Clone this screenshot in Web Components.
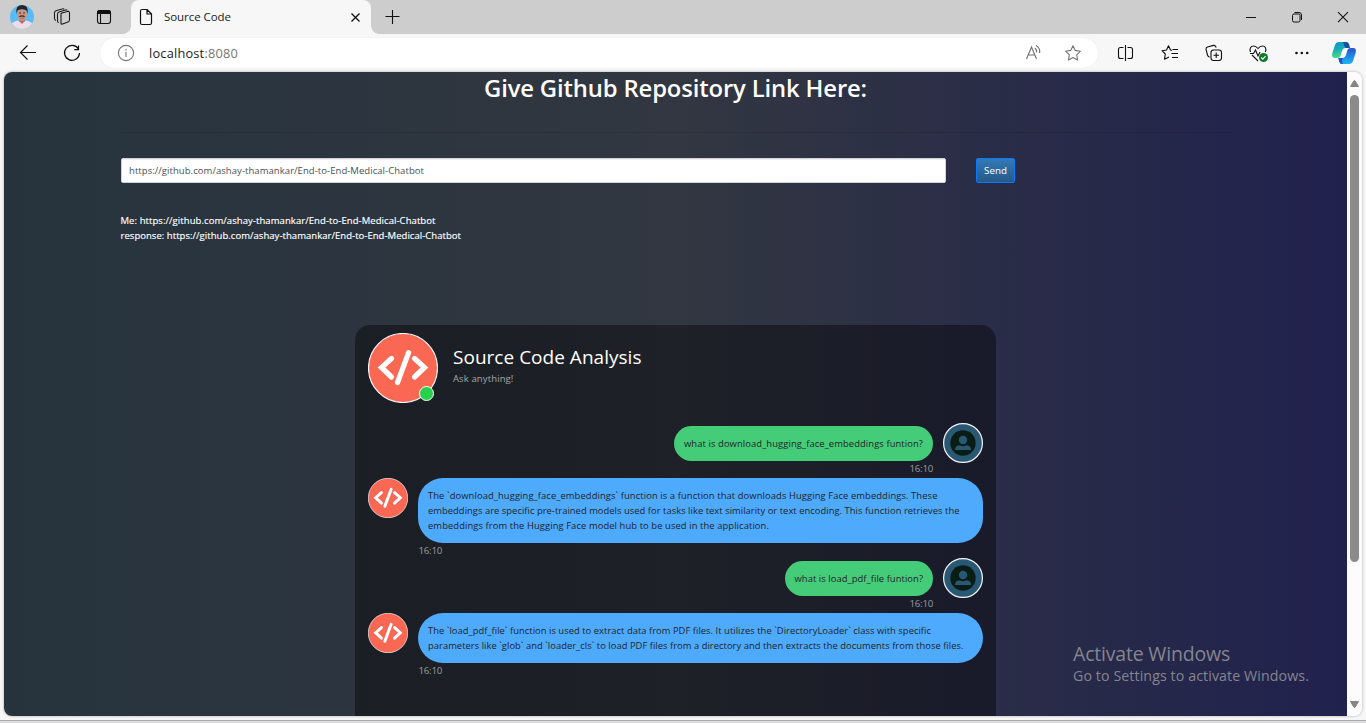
<!DOCTYPE html>
<html lang="en"><head><meta charset="utf-8"><title>Source Code</title>
<style>html,body{margin:0;height:100%;overflow:hidden}body{font-family:"Open Sans","Noto Sans",sans-serif;background:#f7f7f7}</style></head>
<body><browser-window></browser-window>

<template id="t-window"><style>
:host{display:flex;flex-direction:column;width:1366px;height:723px;background:#f7f7f7;overflow:hidden}
.frame{display:flex;height:644px;margin:0 4px 0 4px;border-radius:8px;overflow:hidden;box-shadow:0 0 3px #0005;flex:none}
.edge{margin-top:4px;height:2px;border-top:1px solid #aaa;background:#dcdcdf}
</style><tab-strip></tab-strip><address-bar></address-bar>
<div class="frame"><web-page></web-page><scroll-bar></scroll-bar></div><div class="edge"></div></template>

<template id="t-tabs"><style>
:host{display:flex;height:34px;background:#cdcdcd;flex:none;align-items:center}
svg{display:block;flex:none}
.left{display:flex;width:131px;box-sizing:border-box;padding-left:10px;align-items:center}
.tab{width:240px;height:34px;background:#f7f7f7;border-radius:8px 8px 0 0;display:flex;align-items:center;box-sizing:border-box;padding:0 9px 0 8px;position:relative;font-size:11.5px;color:#1b1b1b}
.tab:before,.tab:after{content:"";position:absolute;bottom:0;width:8px;height:8px}
.tab:before{left:-8px;background:radial-gradient(circle at 0 0,transparent 7.5px,#f7f7f7 8px)}
.tab:after{right:-8px;background:radial-gradient(circle at 100% 0,transparent 7.5px,#f7f7f7 8px)}
.tab fit-text{margin:0 auto 2px 11px}
.ctl{display:flex;margin-left:auto;gap:30px;padding-right:15px}
</style>
<div class="left">
<svg width="24" height="24" viewBox="0 0 24 24"><defs><clipPath id="c"><circle cx="12" cy="12" r="12"/></clipPath></defs><g clip-path="url(#c)"><rect width="24" height="24" fill="#58bdf4"/><path d="M0 24V20Q2 17 8 15.500L12 18L16 15.500Q22 17 24 20V24Z" fill="#eddce8"/><path d="M9 13h6v3l-3 3-3-3z" fill="#a77262"/><ellipse cx="12" cy="9.300" rx="5" ry="6.600" fill="#c99685"/><path d="M6.500 9Q5 0 12 0T17.500 9L16.500 5.500Q12 3 7.500 5.500Z" fill="#25252b"/><path d="M9 8h2M13 8h2" stroke="#493332"/><path d="M9.400 11.700Q12 10 14.600 11.700" stroke="#342327" stroke-width="1.300" fill="none"/><path d="M10.500 13.200h3" stroke="#a64449" stroke-width=".8"/></g></svg>
<svg style="margin-left:19px" width="18" height="18" viewBox="0 0 18 18" fill="none" stroke="#1b1b1b" stroke-width="1.100" stroke-linejoin="round"><path d="M8 6.500Q7.500 5.500 9 5L14.500 3.500Q16.500 3 16.500 5V12Q16.500 13.500 15 14L9.500 16Q8 16.500 8 15Z"/><path d="M5.800 14.500Q4.500 14.500 4.500 13V6Q4.500 4.500 6 4L12.500 2Q13.500 1.500 14.200 2.500M3 12.500Q1.500 12 1.500 10.500V4.500Q1.500 3.200 3 2.700L9 1Q10.500.5 11.200 1.300"/></svg>
<svg style="margin-left:25px" width="16" height="16" viewBox="0 0 16 16" fill="none" stroke="#111" stroke-width="1.100"><rect x="1.500" y="1.500" width="13" height="13" rx="2.500"/><path d="M1.500 4.500V4Q1.500 1.500 4 1.500H12Q14.500 1.500 14.500 4V4.500Z" fill="#111"/><path d="M4.500 5v9"/></svg></div>
<div class="tab"><svg width="14" height="18" viewBox="0 0 14 18" fill="none" stroke="#111" stroke-width="1.200" stroke-linejoin="round"><path d="M8 1.500H3Q1.500 1.500 1.500 3V15Q1.500 16.500 3 16.500H11Q12.500 16.500 12.500 15V6ZM8 1.500V6H12.500"/></svg><fit-text w="67">Source Code</fit-text>
<svg width="14" height="14" viewBox="0 0 14 14" stroke="#111" stroke-width="1.300"><path d="M3.500 3.500l8 8M11.500 3.500L3.500 11.500"/></svg></div>
<svg style="margin-left:14px" width="16" height="16" viewBox="0 0 16 16" stroke="#111" stroke-width="1.100"><path d="M7.500 1v14M.5 7.500h14"/></svg>
<div class="ctl"><svg width="16" height="16" stroke="#111"><path d="M3 8.500h10"/></svg><svg width="16" height="16" fill="none" stroke="#111"><rect x="3.500" y="5" width="7.500" height="8" rx="1.500"/><path d="M5.500 3.500H10Q12.500 3.500 12.500 6V11"/></svg><svg width="16" height="16" stroke="#111" stroke-width="1.100"><path d="M3 3.200l10 10M13 3.200L3 13.200"/></svg></div></template>

<template id="t-address"><style>
:host{display:flex;height:38px;align-items:center;background:#f7f7f7;flex:none;box-sizing:border-box;padding-left:18px}
svg{display:block;flex:none}
.field{display:flex;align-items:center;width:998px;height:30px;border-radius:15px;background:#fff;margin-left:18px;box-sizing:border-box;padding:0 16px 0 17px;font-size:12.800px;box-shadow:0 0 2px #0001;color:#1b1b1b}
.field fit-text{margin:0 auto 0 14px}.port{color:#767676}
.tools{display:flex;gap:24px;margin-left:18px;align-items:center}
</style>
<svg width="20" height="20" fill="none" stroke="#111" stroke-width="1.150"><path d="M18 9.500H2.500M9.500 2.500L2.500 9.500l7 7"/></svg>
<svg style="margin-left:24px" width="20" height="20" fill="none" stroke="#111" stroke-width="1.200"><path d="M16.400 5.900A7.500 7.500 0 1 0 17.500 10M16.500 2.500V6.700H12.300"/></svg>
<div class="field"><svg width="18" height="18" fill="none" stroke="#737373" stroke-width="1.100"><circle cx="9" cy="9" r="7.600"/><path d="M9 8v5M9 5v1.500"/></svg><fit-text w="89">localhost<span class="port">:8080</span></fit-text>
<svg width="17" height="18" fill="none" stroke="#737373" stroke-width="1.150"><path d="M1.500 15L6.500 3 11.500 15M3.200 11H9.800M9.800 4.200Q12 5.500 11.500 8.500M11 1.500Q15.500 4 14.500 9"/></svg>
<svg style="margin-left:22px" width="18" height="18" fill="none" stroke="#737373" stroke-width="1.100" stroke-linejoin="round"><path d="M9 1.700l2.300 4.700 5.100.8-3.700 3.600.9 5.200L9 13.500 4.400 16l.9-5.200L1.600 7.200l5.100-.8z"/></svg></div>
<div class="tools">
<svg width="20" height="20" fill="none" stroke="#111" stroke-width="1.100"><path d="M7.500 4.500H4.500Q2.500 4.500 2.500 6.500V13.500Q2.500 15.500 4.500 15.500H7.500M11.500 4.500H14.500Q16.500 4.500 16.500 6.500V13.500Q16.500 15.500 14.500 15.500H11.500M9.500 2v16"/></svg>
<svg width="20" height="20" fill="none" stroke="#111" stroke-width="1.100" stroke-linejoin="round"><path d="M12 7.500L10.500 7 8.500 2.700 6.500 7 2 7.700l3.300 3.300-.8 5.200 4.500-2.300M12.500 6.500H18M11.500 10.500H18M12 14.500H18"/></svg>
<svg width="20" height="20" fill="none" stroke="#111" stroke-width="1.100"><rect x="7" y="7" width="10.500" height="10.500" rx="2.500"/><path d="M12.200 9.500v5.500M9.500 12.200H15M5.700 14Q4 14 3.500 12L2 6.500Q1.700 4.500 3.500 4L9.500 2.400Q11.500 2 12.200 4.500"/></svg>
<svg width="20" height="20" fill="none" stroke="#111" stroke-width="1.100"><path d="M2.500 9C1 5.500 3 3 5.500 3Q8 3 10 5.500Q12 3 14.500 3C17 3 19 5.500 17.300 9M2 10.500H5.500L7.500 7 10 13 12 9M4 12L10 18"/><circle cx="15.500" cy="14.500" r="4.500" fill="#0d7b2b" stroke="none"/><path d="M13.300 14.500l1.500 1.600 2.700-3" stroke="#fff"/></svg>
<svg width="20" height="20" fill="#111"><circle cx="4.500" cy="10" r="1.300"/><circle cx="9.800" cy="10" r="1.300"/><circle cx="15.200" cy="10" r="1.300"/></svg></div>
<svg style="margin-left:19px" width="26" height="24" viewBox="0 0 26 24"><defs><linearGradient id="a" x2=".3" y2="1"><stop stop-color="#168dd0"/><stop offset=".5" stop-color="#17adb8"/><stop offset="1" stop-color="#4fdd82"/></linearGradient><linearGradient id="b" x2="0" y2="1"><stop stop-color="#2853cf"/><stop offset="1" stop-color="#19b8f4"/></linearGradient></defs><path d="M8 1H15Q17 1 17.800 3.500L18.600 7H14Q12 7 11 10L9.500 15Q8.800 17 6.500 17H4Q0 17 1.400 12L4 4Q5 1 8 1Z" fill="url(#a)"/><path d="M12 1H15.500Q17.500 1 18.300 4L19 7H14.500Q13 5 12 1Z" fill="#164fa8"/><path d="M18 23H11Q9 23 8.200 20.500L7.400 17H12Q14 17 15 14L16.500 9Q17.200 7 19.500 7H22Q26 7 24.600 12L22 20Q21 23 18 23Z" fill="url(#b)"/><path d="M7.400 17H12Q10 20 12 23H11Q9 23 8.200 20.500Z" fill="#2450d5"/></svg></template>

<template id="t-page"><style>
:host{display:flex;flex-direction:column;flex:none;width:1343px;height:644px;background:linear-gradient(to right,rgb(38,51,61),rgb(50,55,65),rgb(33,33,78));overflow:hidden;position:relative;color:#fff}
h1{margin:0;text-align:center;font-size:23.800px;line-height:33px;height:33px;font-weight:600;flex:none}
hr{margin:27px 0 0;width:1110px;align-self:center;border:0;border-top:1px solid #0000001a;flex:none}
.row{display:flex;margin:25px 0 0 117px;gap:30px;height:25px;flex:none}
.in{width:825px;box-sizing:border-box;border:1px solid #ced4da;border-radius:2px;background:#fff;padding-left:7px;color:#495057;font-size:9.500px;line-height:23px;box-shadow:inset 0 1px 1px #0001}
.btn{width:39px;box-sizing:border-box;border:1px solid #087aff;border-radius:2px;background:linear-gradient(#337ab7,#265a88);font:500 9.800px/23px "Open Sans",sans-serif;text-align:center;color:#fff;padding:0}
.log{display:flex;flex-direction:column;flex:none;margin:30px 0 0 116.500px;font-size:9.500px;line-height:15px;font-weight:500;height:112px;-webkit-text-stroke:.15px #fff}
.log fit-text{align-self:flex-start}
chat-card{margin-left:351px}
.wm{position:absolute;left:1069px;top:569px;display:flex;flex-direction:column;align-items:flex-start;color:#84858e}
.wm fit-text:first-child{font-size:19.500px;line-height:25px}.wm fit-text:last-child{font-size:14.200px;line-height:20px}
</style>
<h1><fit-text w="383">Give Github Repository Link Here:</fit-text></h1><hr>
<div class="row"><div class="in"><fit-text w="295">https://github.com/ashay-thamankar/End-to-End-Medical-Chatbot</fit-text></div><button class="btn"><fit-text w="23">Send</fit-text></button></div>
<div class="log"><fit-text w="315">Me: https://github.com/ashay-thamankar/End-to-End-Medical-Chatbot</fit-text><fit-text w="340.500">response: https://github.com/ashay-thamankar/End-to-End-Medical-Chatbot</fit-text></div>
<chat-card></chat-card>
<div class="wm"><fit-text w="157">Activate Windows</fit-text><fit-text w="236">Go to Settings to activate Windows.</fit-text></div></template>

<template id="t-card"><style>
:host{display:flex;flex-direction:column;width:641px;height:500px;background:#0006;border-radius:15px 15px 0 0;box-sizing:border-box;padding:8px 13px 0;flex:none}
header{display:flex;height:90px;flex:none}
.av{position:relative;width:70px;height:70px}
.dot{position:absolute;left:51px;top:53px;width:15px;height:15px;border-radius:50%;box-sizing:border-box;background:#28d14c;border:1.500px solid #fff}
.info{display:flex;flex-direction:column;align-items:flex-start;padding:10px 0 0 15px}
.info fit-text:first-child{font-size:19px;line-height:28px}
.info fit-text:last-child{font-size:9.500px;line-height:15px;color:#ffffff99}
</style><header><div class="av"><code-avatar style="--s:70px"></code-avatar><span class="dot"></span></div>
<div class="info"><fit-text w="188.500">Source Code Analysis</fit-text><fit-text w="60.500">Ask anything!</fit-text></div></header>
<chat-message class="user" time="16:10"><fit-text w="239">what is download_hugging_face_embeddings funtion?</fit-text></chat-message>
<chat-message class="bot" time="16:10"><fit-text w="509.500">The `download_hugging_face_embeddings` function is a function that downloads Hugging Face embeddings. These</fit-text><fit-text w="531.500">embeddings are specific pre-trained models used for tasks like text similarity or text encoding. This function retrieves the</fit-text><fit-text w="341">embeddings from the Hugging Face model hub to be used in the application.</fit-text></chat-message>
<chat-message class="user" time="16:10"><fit-text w="128.500">what is load_pdf_file funtion?</fit-text></chat-message>
<chat-message class="bot" time="16:10"><fit-text w="503">The `load_pdf_file` function is used to extract data from PDF files. It utilizes the `DirectoryLoader` class with specific</fit-text><fit-text w="535.500">parameters like `glob` and `loader_cls` to load PDF files from a directory and then extracts the documents from those files.</fit-text></chat-message></template>

<template id="t-msg"><style>
:host{display:flex;flex:none;gap:10px}
:host(.user){flex-direction:row-reverse;height:55px}
.col{display:flex;flex-direction:column;align-items:flex-start}
:host(.user) .col{align-items:flex-end;padding-top:3px}
:host(.bot) .col{flex:1}
.bub{display:flex;flex-direction:column;align-items:flex-start;padding:10px;border-radius:25px;box-sizing:border-box;color:#212529;font-size:9.400px;line-height:15px}
:host(.user) .bub{background:#45cc79}
:host(.bot) .bub{background:#4eaafd;width:565px}
.time{font-size:9.700px;line-height:15px;color:#ffffff8c}
:host(.bot) .time{padding-left:.500px}
user-avatar,code-avatar{--s:40px}
:host(.user) code-avatar,:host(.bot) user-avatar{display:none}
</style><code-avatar></code-avatar><user-avatar></user-avatar><div class="col"><div class="bub"><slot></slot></div><span class="time"><fit-text w="23.500"></fit-text></span></div></template>

<template id="t-code"><style>:host{display:block;width:var(--s);height:var(--s);flex:none}svg{display:block;width:100%;height:100%}</style>
<svg viewBox="0 0 70 70"><circle cx="35" cy="35" r="34.500" fill="#fa6854" stroke="#f5f6fa" stroke-width="1.200"/><g fill="none" stroke="#fff" stroke-width="5.200"><path stroke-linejoin="miter" d="M23.500 25.500L13.500 34.500l10 9.500M46.500 25.500L56.500 34.500l-10 9.500" stroke-linecap="round"/><path d="M40.500 19.800L29.500 49.500" stroke-linecap="round"/></g></svg></template>

<template id="t-user"><style>:host{display:block;width:var(--s);height:var(--s);flex:none}svg{display:block;width:100%;height:100%}</style>
<svg viewBox="0 0 40 40"><circle cx="20" cy="20" r="19.400" fill="#285873" stroke="#f5f6fa" stroke-width="1.200"/><circle cx="20" cy="20" r="12.700" fill="#0a1d14"/><circle cx="20" cy="17" r="4.200" fill="#285873"/><path d="M12 27Q12 22.500 16.500 22.200Q20 24.200 23.500 22.200Q28 22.500 28 27Z" fill="#285873"/></svg></template>

<template id="t-scroll"><style>:host{display:flex;flex-direction:column;align-items:center;flex:none;width:15px;background:#fcfcfc;padding:8px 0;box-sizing:border-box;height:644px}.thumb{width:9px;height:467px;border-radius:5px;background:#8b8b8b;margin-top:8px}svg{display:block}svg:last-child{margin-top:auto}</style>
<svg width="9" height="7"><path d="M.5 6.500L3.700 1Q4.500 0 5.300 1L8.500 6.500Z" fill="#858585" stroke="#858585" stroke-linejoin="round"/></svg><div class="thumb"></div><svg width="9" height="7"><path d="M.5 .5L3.700 6Q4.500 7 5.300 6L8.500 .5Z" fill="#858585" stroke="#858585" stroke-linejoin="round"/></svg></template>

<script>
const define=(name,tpl,init)=>customElements.define(name,class extends HTMLElement{
  constructor(){super();this.attachShadow({mode:'open'}).append(document.getElementById(tpl).content.cloneNode(true));}
  connectedCallback(){if(init)init(this);}
});
define('browser-window','t-window');
define('tab-strip','t-tabs');
define('address-bar','t-address');
define('web-page','t-page');
define('scroll-bar','t-scroll');
define('chat-card','t-card');
define('chat-message','t-msg',el=>{el.shadowRoot.querySelector('.time fit-text').textContent=el.getAttribute('time');});
define('code-avatar','t-code');
define('user-avatar','t-user');
// A single line of text whose tracking is adjusted to fill the width given in "w".
customElements.define('fit-text',class extends HTMLElement{
  constructor(){super();this.attachShadow({mode:'open'}).innerHTML='<style>:host{display:inline-block;white-space:pre;vertical-align:top}</style><slot></slot>';}
  connectedCallback(){
    const n=this.textContent.length,w=+this.getAttribute('w'),now=this.getBoundingClientRect().width;
    if(n&&now)this.style.letterSpacing=((w-now)/n)+'px';
  }
});
</script></body></html>
